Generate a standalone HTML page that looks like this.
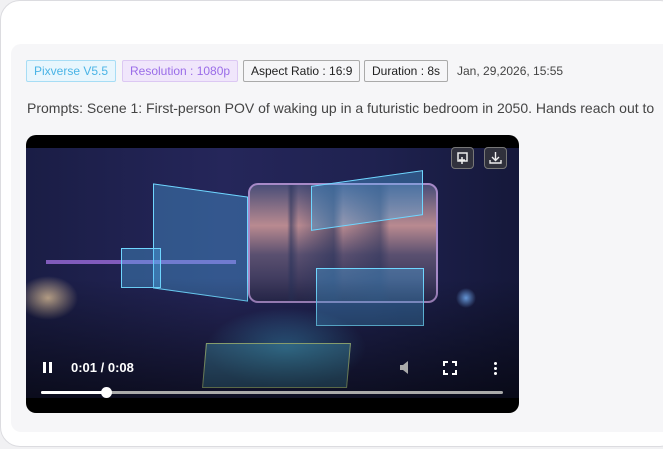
<!DOCTYPE html>
<html><head><style>
*{margin:0;padding:0;box-sizing:border-box}
body{width:663px;height:449px;background:#f1f1f3;font-family:"Liberation Sans",sans-serif;position:relative;overflow:hidden}
.card{position:absolute;left:0;top:0;width:680px;height:447px;background:#fff;border:1.5px solid #dcdce0;border-radius:20px}
.panel{position:absolute;left:11px;top:44px;width:670px;height:388px;background:#f6f6f8;border-radius:10px}
.tag{position:absolute;top:60px;height:22px;font-size:12px;line-height:20px;padding:0 7px;border:1px solid;border-radius:2px;white-space:nowrap}
.vid{position:absolute;left:26px;top:135px;width:493px;height:278px;background:#000;border-radius:10px;overflow:hidden}
.scene{position:absolute;left:0;top:13px;width:493px;height:250px;background:
radial-gradient(ellipse 30px 22px at 22px 150px,rgba(255,220,170,.75),transparent),
radial-gradient(ellipse 80px 40px at 260px 200px,rgba(80,200,255,.5),transparent),
radial-gradient(ellipse 10px 10px at 440px 150px,rgba(120,180,255,.9),transparent),
linear-gradient(90deg,#1a1d45 0%,#25265a 40%,#1f2250 70%,#15183a 100%)}
.win{position:absolute;left:222px;top:35px;width:190px;height:120px;border:2px solid #a78ac8;border-radius:10px;background:
linear-gradient(90deg,transparent 20%,rgba(40,50,90,.6) 22%,transparent 26%,rgba(40,50,90,.6) 45%,transparent 50%,rgba(40,50,90,.5) 70%,transparent 75%),
linear-gradient(180deg,#4a4e78 0%,#b98a90 35%,#5a5070 60%,#2a2a50 100%)}
.holo{position:absolute;border:1.5px solid #6fd6ff;background:rgba(80,180,240,.35)}
.btn{position:absolute;top:12px;width:23px;height:22px;border:1px solid #777;border-radius:4px;background:rgba(60,60,60,.7)}
</style></head><body>
<div class="card"></div>
<div class="panel"></div>
<div class="tag" style="left:26px;color:#4ab4e6;background:#e8f6fd;border-color:#a7ddf5">Pixverse V5.5</div>
<div class="tag" style="left:122px;color:#9a6ce8;background:#f0e6fb;border-color:#dcc8f3">Resolution : 1080p</div>
<div class="tag" style="left:243px;color:#222;background:#f6f6f8;border-color:#aaa">Aspect Ratio : 16:9</div>
<div class="tag" style="left:364px;color:#222;background:#f6f6f8;border-color:#aaa">Duration : 8s</div>
<div style="position:absolute;left:457px;top:64px;font-size:12px;color:#444">Jan, 29,2026, 15:55</div>
<div style="position:absolute;left:27px;top:100px;font-size:14px;color:#444;white-space:nowrap">Prompts: Scene 1: First-person POV of waking up in a futuristic bedroom in 2050. Hands reach out to</div>
<div class="vid">
<div class="scene">
<div class="win"></div>
<div style="position:absolute;left:20px;top:112px;width:190px;height:4px;background:#9a6ad8;opacity:.8"></div>
<div class="holo" style="left:127px;top:42px;width:95px;height:105px;transform:skewY(8deg)"></div>
<div class="holo" style="left:285px;top:30px;width:112px;height:45px;transform:skewY(-8deg)"></div>
<div class="holo" style="left:290px;top:120px;width:108px;height:58px"></div>
<div class="holo" style="left:95px;top:100px;width:40px;height:40px"></div>
<div class="holo" style="left:178px;top:195px;width:145px;height:45px;background:rgba(90,200,230,.45);border-color:#c8e8a0;transform:skewX(-5deg)"></div>
<div style="position:absolute;left:0;top:130px;width:493px;height:120px;background:linear-gradient(180deg,transparent,rgba(0,0,0,.6))"></div>
</div>
<div class="btn" style="left:425px"><svg width="21" height="20"><rect x="6" y="5" width="9" height="8" fill="none" stroke="#eee" stroke-width="1.5"/><path d="M10 9v7M7 12h6" stroke="#eee" stroke-width="1.5"/></svg></div>
<div class="btn" style="left:458px"><svg width="21" height="20"><path d="M10.5 4v8M7 9l3.5 3.5L14 9M5 12v3h11v-3" fill="none" stroke="#eee" stroke-width="1.4"/></svg></div>
<div style="position:absolute;left:17px;top:227px;width:3px;height:11px;background:#fff;box-shadow:6px 0 #fff"></div>
<div style="position:absolute;left:45px;top:225px;color:#fff;font-size:13px;font-weight:bold">0:01 / 0:08</div>
<svg style="position:absolute;left:372px;top:225px" width="16" height="15"><path d="M2 5h3l5-4v13l-5-4H2z" fill="#aaa"/></svg>
<svg style="position:absolute;left:417px;top:226px" width="14" height="14"><path d="M1 5V1h4M9 1h4v4M13 9v4H9M5 13H1V9" fill="none" stroke="#fff" stroke-width="2"/></svg>
<div style="position:absolute;left:468px;top:227px;width:3px;height:3px;background:#fff;border-radius:50%;box-shadow:0 5px #fff,0 10px #fff"></div>
<div style="position:absolute;left:15px;top:256px;width:462px;height:3px;background:#aaa;border-radius:2px"></div>
<div style="position:absolute;left:15px;top:256px;width:66px;height:3px;background:#fff;border-radius:2px"></div>
<div style="position:absolute;left:75px;top:252px;width:11px;height:11px;background:#fff;border-radius:50%"></div>
</div>
</body></html>
